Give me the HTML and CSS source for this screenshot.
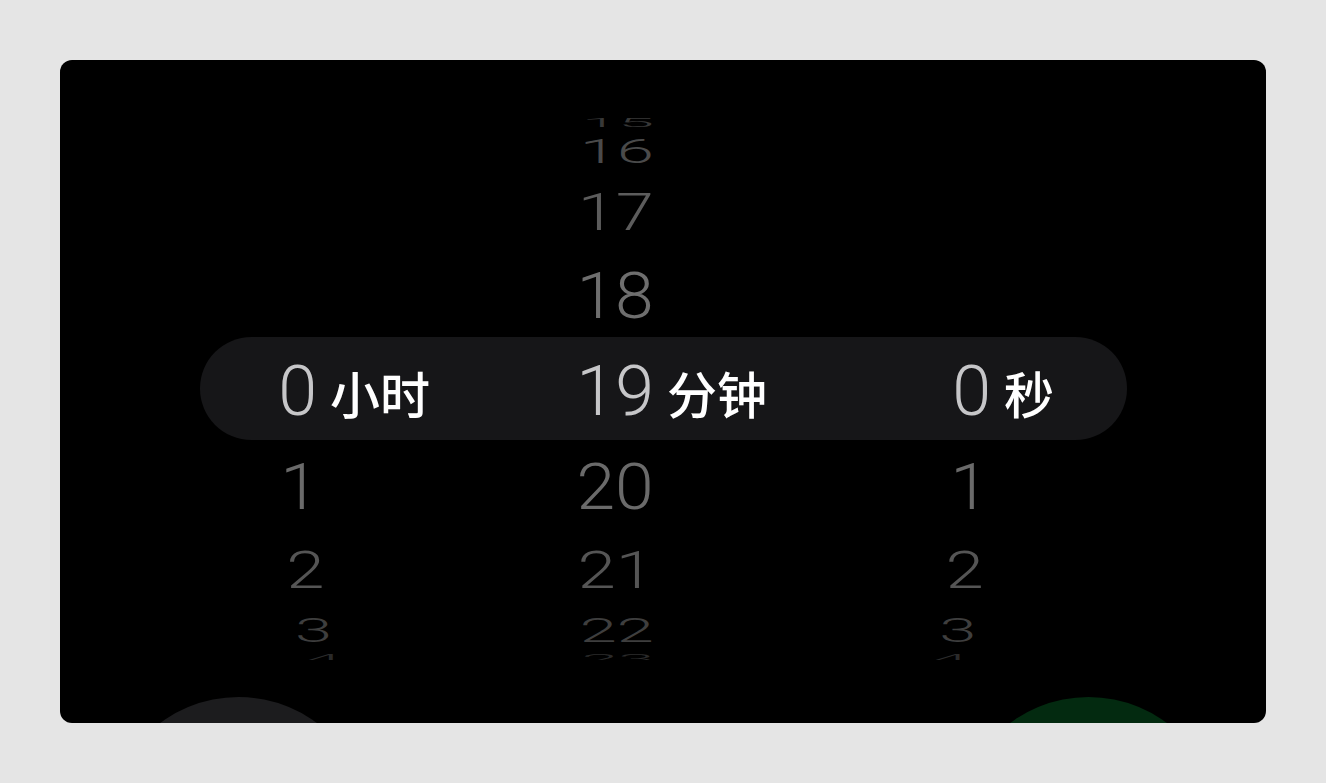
FILE: index.html
```html
<!DOCTYPE html>
<html lang="zh">
<head>
<meta charset="utf-8">
<title>计时器</title>
<link rel="stylesheet" href="styles.css">
</head>
<body>
<div class="card">
  <div class="picker">
    <div class="bar"></div>
    <div class="cols">
      <div class="col col-h">
        <div class="wheel">
          <span class="item k0">0</span>
          <span class="item k1">1</span>
          <span class="item k2">2</span>
          <span class="item k3">3</span>
          <span class="item k4">4</span>
        </div>
        <div class="label">小时</div>
      </div>
      <div class="col col-m">
        <div class="wheel">
          <span class="item km4">15</span>
          <span class="item km3">16</span>
          <span class="item km2">17</span>
          <span class="item km1">18</span>
          <span class="item k0">19</span>
          <span class="item k1">20</span>
          <span class="item k2">21</span>
          <span class="item k3">22</span>
          <span class="item k4">23</span>
        </div>
        <div class="label">分钟</div>
      </div>
      <div class="col col-s">
        <div class="wheel">
          <span class="item k0">0</span>
          <span class="item k1">1</span>
          <span class="item k2">2</span>
          <span class="item k3">3</span>
          <span class="item k4">4</span>
        </div>
        <div class="label">秒</div>
      </div>
    </div>
  </div>
  <div class="buttons">
    <div class="btn btn-cancel"></div>
    <div class="btn btn-start"></div>
  </div>
</div>
</body>
</html>
```

FILE: styles.css
```css
html, body {
  margin: 0;
  padding: 0;
}
body {
  background: #e5e5e5;
  font-family: Roboto, "Liberation Sans", "Noto Sans CJK SC", sans-serif;
}
.card {
  margin: 60px;
  height: 663px;
  background: #000;
  border-radius: 12px;
  overflow: hidden;
  padding-top: 57px;
  box-sizing: border-box;
}
.picker {
  display: grid;
  height: 543px;
  margin: 0 139px 0 140px;
  overflow: hidden;
}
.bar {
  grid-area: 1 / 1;
  align-self: center;
  height: 103px;
  border-radius: 52px;
  background: #161618;
}
.cols {
  grid-area: 1 / 1;
  display: flex;
  align-items: stretch;
  padding-left: 7px;
  column-gap: 114px;
}
.col {
  display: flex;
  align-items: center;
}
.col-h { --off: 366px; }
.col-m { --off: 45px; }
.col-s { --off: -307px; }
.wheel {
  display: grid;
  width: 110px;
  height: 100%;
  padding-top: 5px;
  box-sizing: border-box;
}
.item {
  grid-area: 1 / 1;
  justify-self: end;
  align-self: center;
  font-family: Roboto, "Liberation Sans", sans-serif;
  font-weight: 300;
  font-size: 70px;
  line-height: 70px;
  color: var(--c);
  transform: translate(calc(var(--off) * (1 - var(--s))), var(--y)) scale(var(--s), calc(var(--s) * var(--sy)));
}
.k0  { --y: 0px;      --s: 1;    --sy: 1;    --c: #c6c6c8; }
.km1 { --y: -95.5px;  --s: .994; --sy: .937; --c: #6e6e6e; }
.km2 { --y: -179px;   --s: .978; --sy: .757; --c: #5c5c5c; }
.km3 { --y: -239.5px; --s: .956; --sy: .495; --c: #4a4a4a; }
.km4 { --y: -268px;   --s: .93;  --sy: .184; --c: #383838; }
.k1  { --y: 95.5px;   --s: .994; --sy: .937; --c: #6a6a6a; }
.k2  { --y: 179px;    --s: .978; --sy: .757; --c: #555555; }
.k3  { --y: 239.5px;  --s: .956; --sy: .495; --c: #3e3e3e; }
.k4  { --y: 268px;    --s: .93;  --sy: .184; --c: #2a2a2a; }
.label {
  margin-left: 13px;
  margin-top: 6px;
  font-family: "Noto Sans CJK SC", sans-serif;
  font-weight: 500;
  font-size: 50px;
  line-height: 60px;
  color: #fff;
  white-space: nowrap;
}
.buttons {
  display: flex;
  justify-content: space-between;
  padding: 0 46px 0 47px;
  margin-top: 37px;
}
.btn {
  width: 263px;
  height: 263px;
  border-radius: 50%;
  flex: none;
}
.btn-cancel { background: #1c1c1e; }
.btn-start { background: #032a10; }
```
